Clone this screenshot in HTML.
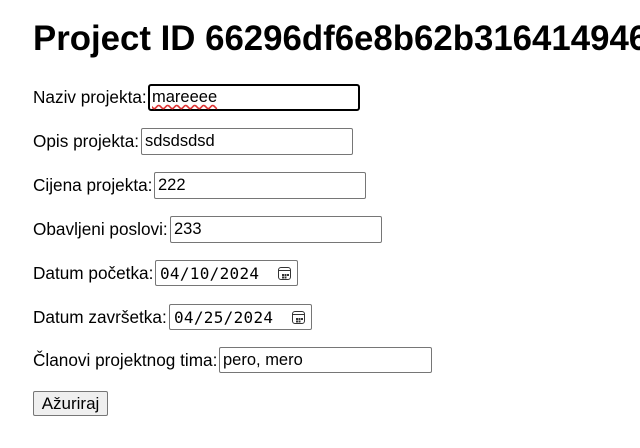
<!DOCTYPE html>
<html><head><meta charset="utf-8"><style>
body{margin:0;width:640px;height:448px;overflow:hidden;background:#fff;font-family:"Liberation Sans",Arial,sans-serif;color:#000;position:relative}
h1{position:absolute;left:33px;top:19px;margin:0;font-size:34.8px;font-weight:bold;white-space:nowrap}
.l{position:absolute;left:33px;font-size:17.2px;white-space:nowrap}
.i{position:absolute;box-sizing:border-box;border:1px solid #767676;border-radius:2px;font-size:16.5px;padding:3px 3px;background:#fff;line-height:19px;white-space:nowrap}
.d{font-family:"DejaVu Sans Mono","Liberation Mono",monospace;font-size:16px;padding:3px 4px;letter-spacing:0.3px}
.cal{position:absolute;right:6px;top:6px;width:13px;height:13px;border:1.5px solid #333;border-radius:3px;box-sizing:border-box}
.cal:before{content:"";position:absolute;left:0;right:0;top:2px;border-top:1.5px solid #333}
.cal:after{content:"";position:absolute;left:3px;top:6px;width:1.5px;height:1.5px;background:#333;box-shadow:2.5px 0 #333,5px 0 #333,0 2.5px #333,2.5px 2.5px #333}
.b{position:absolute;left:33px;top:391px;width:75px;height:25px;box-sizing:border-box;border:1px solid #767676;border-radius:2px;background:#efefef;font-size:17px;text-align:center;line-height:23px}
</style></head><body>
<h1>Project ID 66296df6e8b62b316414946c</h1>
<div class="l" style="top:87px">Naziv projekta:</div>
<div class="i" style="left:148px;top:84px;width:212px;height:27px;border:2px solid #000;border-radius:3px;padding:2px 2px"><span style="text-decoration:underline wavy #d33;text-underline-offset:2px">mareeee</span></div>
<div class="l" style="top:131px">Opis projekta:</div>
<div class="i" style="left:141px;top:128px;width:212px;height:27px">sdsdsdsd</div>
<div class="l" style="top:175px">Cijena projekta:</div>
<div class="i" style="left:154px;top:172px;width:212px;height:27px">222</div>
<div class="l" style="top:219px">Obavljeni poslovi:</div>
<div class="i" style="left:170px;top:216px;width:212px;height:27px">233</div>
<div class="l" style="top:263px">Datum početka:</div>
<div class="i d" style="left:155px;top:260px;width:143px;height:26px">04/10/2024<span class="cal"></span></div>
<div class="l" style="top:307px">Datum završetka:</div>
<div class="i d" style="left:169px;top:304px;width:143px;height:26px">04/25/2024<span class="cal"></span></div>
<div class="l" style="top:350px">Članovi projektnog tima:</div>
<div class="i" style="left:219px;top:347px;width:213px;height:26px">pero, mero</div>
<div class="b">Ažuriraj</div>
</body></html>
